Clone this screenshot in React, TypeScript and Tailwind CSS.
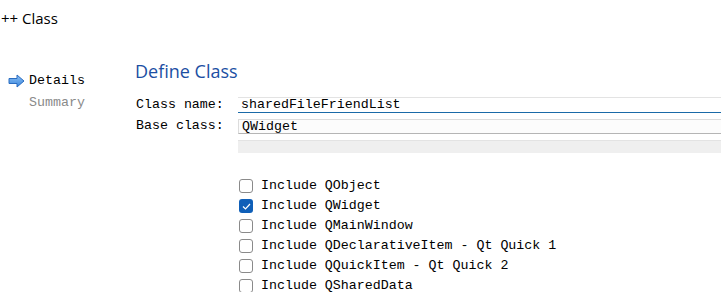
import React from "react";

const mono = { fontFamily: '"Liberation Mono", "DejaVu Sans Mono", monospace' };

const options = [
  { label: "Include QObject", checked: false },
  { label: "Include QWidget", checked: true },
  { label: "Include QMainWindow", checked: false },
  { label: "Include QDeclarativeItem - Qt Quick 1", checked: false },
  { label: "Include QQuickItem - Qt Quick 2", checked: false },
  { label: "Include QSharedData", checked: false },
];

function Arrow() {
  return (
    <svg width="17" height="14" viewBox="0 0 17 14">
      <defs>
        <linearGradient id="ag" x1="0" y1="0" x2="0" y2="1">
          <stop offset="0" stopColor="#8cc0f5" />
          <stop offset="1" stopColor="#3a86dc" />
        </linearGradient>
      </defs>
      <path d="M1 4.5 H9 V1 L16 7 L9 13 V9.5 H1 Z" fill="url(#ag)" stroke="#2a6cc0" strokeWidth="1" strokeLinejoin="round" />
    </svg>
  );
}

function Checkbox({ checked }: { checked: boolean }) {
  if (checked) {
    return (
      <span className="flex h-[14px] w-[14px] items-center justify-center rounded-[3px] bg-[#0f5fb8]">
        <svg width="9" height="7" viewBox="0 0 9 7">
          <path d="M1 3.5 L3.5 6 L8 1" fill="none" stroke="white" strokeWidth="1.2" />
        </svg>
      </span>
    );
  }
  return <span className="block h-[14px] w-[14px] rounded-[3px] border border-[#8a8a8a] bg-white" />;
}

export default function App() {
  return (
    <div className="h-[292px] w-[721px] overflow-hidden bg-white text-black">
      <div className="pl-[1px] pt-[8px] text-[15px] leading-[20px]" style={{ fontFamily: '"Open Sans", "Noto Sans", sans-serif' }}>
        ++ Class
      </div>
      <div className="mt-[32px] flex">
        <div className="w-[135px] shrink-0 pt-[11px] text-[13.3px] leading-[20px]" style={mono}>
          <div className="flex items-center pl-[8px]">
            <Arrow />
            <span className="ml-[4px]">Details</span>
          </div>
          <div className="mt-[2px] pl-[29px] text-[#8a8a8a]">Summary</div>
        </div>
        <div className="min-w-0 flex-1">
          <div className="text-[18px] leading-[22px] text-[#1c4fa3]" style={{ fontFamily: '"Open Sans", "Noto Sans", sans-serif' }}>
            Define Class
          </div>
          <div className="mt-[15px] text-[13.3px]" style={mono}>
            <div className="flex items-center">
              <span className="w-[103px] shrink-0 pl-[1px] leading-[16px]">Class name:</span>
              <div className="h-[16px] flex-1 border-t border-[#e3e3e3] border-b border-b-[#1a6aa8] bg-white pl-[3px] leading-[14px]">
                sharedFileFriendList
              </div>
            </div>
            <div className="mt-[5px] flex items-center">
              <span className="w-[103px] shrink-0 pl-[1px] leading-[16px]">Base class:</span>
              <div className="h-[15px] flex-1 border-t border-[#dcdcdc] border-b border-b-[#b5b5b5] border-l border-l-[#dcdcdc] bg-[#fcfcfc] pl-[3px] leading-[13px]">
                QWidget
              </div>
            </div>
            <div className="mt-[6px] flex">
              <span className="w-[103px] shrink-0" />
              <div className="h-[13px] flex-1 border-t border-[#e3e3e3] bg-[#efefef]" />
            </div>
          </div>
          <div className="mt-[23px] flex flex-col pl-[104px] text-[13.3px]" style={mono}>
            {options.map((o) => (
              <div key={o.label} className="flex h-[20px] items-center">
                <Checkbox checked={o.checked} />
                <span className="ml-[8px] whitespace-nowrap leading-[20px]">{o.label}</span>
              </div>
            ))}
          </div>
        </div>
      </div>
    </div>
  );
}
